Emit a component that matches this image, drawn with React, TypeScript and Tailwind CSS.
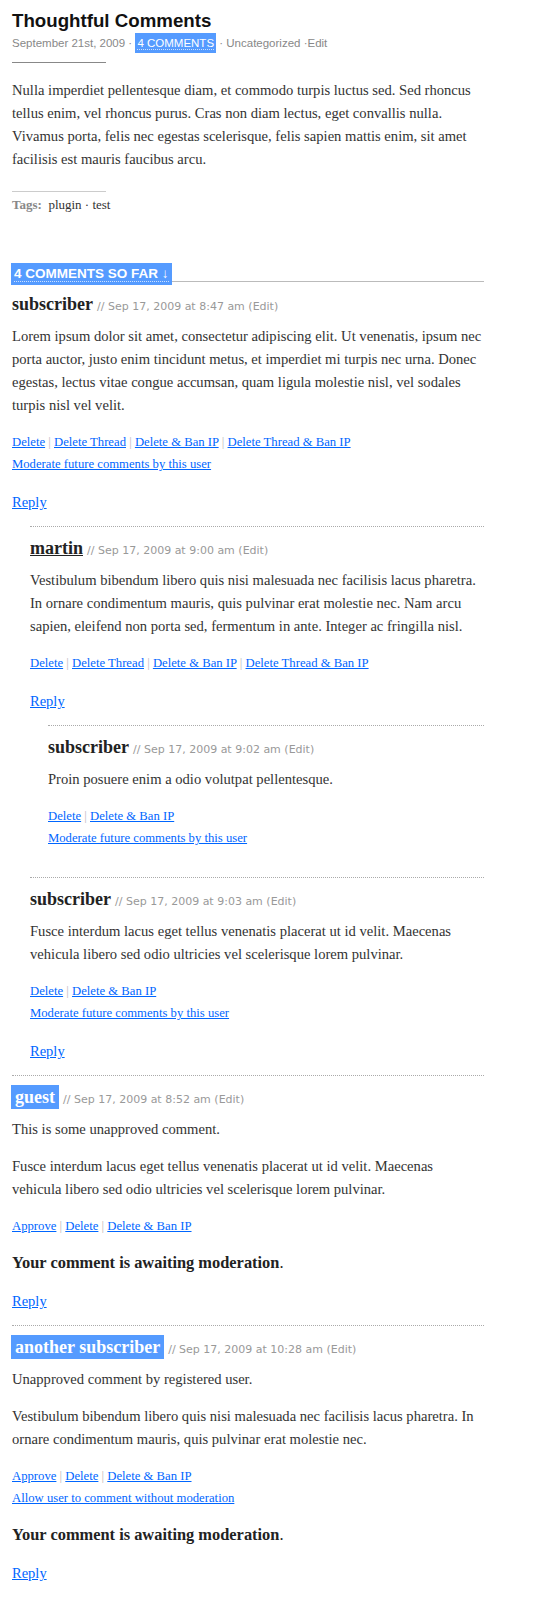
import React from 'react';

type Comment = {
  id: string;
  author: string;
  date: string;
  highlight?: boolean;
  authorLink?: boolean;
  paragraphs: string[];
  actions: string[];
  extra?: string;
  awaiting?: boolean;
  reply?: boolean;
  children?: Comment[];
};

const serif = "[font-family:'Liberation_Serif','Times_New_Roman',serif]";
const sans = "[font-family:'Liberation_Sans',Arial,sans-serif]";
const verdana = "[font-family:'DejaVu_Sans',Verdana,sans-serif]";

const comments: Comment[] = [
  {
    id: 'c1',
    author: 'subscriber',
    date: 'Sep 17, 2009 at 8:47 am',
    paragraphs: [
      'Lorem ipsum dolor sit amet, consectetur adipiscing elit. Ut venenatis, ipsum nec porta auctor, justo enim tincidunt metus, et imperdiet mi turpis nec urna. Donec egestas, lectus vitae congue accumsan, quam ligula molestie nisl, vel sodales turpis nisl vel velit.',
    ],
    actions: ['Delete', 'Delete Thread', 'Delete & Ban IP', 'Delete Thread & Ban IP'],
    extra: 'Moderate future comments by this user',
    reply: true,
    children: [
      {
        id: 'c2',
        author: 'martin',
        authorLink: true,
        date: 'Sep 17, 2009 at 9:00 am',
        paragraphs: [
          'Vestibulum bibendum libero quis nisi malesuada nec facilisis lacus pharetra. In ornare condimentum mauris, quis pulvinar erat molestie nec. Nam arcu sapien, eleifend non porta sed, fermentum in ante. Integer ac fringilla nisl.',
        ],
        actions: ['Delete', 'Delete Thread', 'Delete & Ban IP', 'Delete Thread & Ban IP'],
        reply: true,
        children: [
          {
            id: 'c3',
            author: 'subscriber',
            date: 'Sep 17, 2009 at 9:02 am',
            paragraphs: ['Proin posuere enim a odio volutpat pellentesque.'],
            actions: ['Delete', 'Delete & Ban IP'],
            extra: 'Moderate future comments by this user',
          },
        ],
      },
      {
        id: 'c4',
        author: 'subscriber',
        date: 'Sep 17, 2009 at 9:03 am',
        paragraphs: [
          'Fusce interdum lacus eget tellus venenatis placerat ut id velit. Maecenas vehicula libero sed odio ultricies vel scelerisque lorem pulvinar.',
        ],
        actions: ['Delete', 'Delete & Ban IP'],
        extra: 'Moderate future comments by this user',
        reply: true,
      },
    ],
  },
  {
    id: 'c5',
    author: 'guest',
    highlight: true,
    date: 'Sep 17, 2009 at 8:52 am',
    paragraphs: [
      'This is some unapproved comment.',
      'Fusce interdum lacus eget tellus venenatis placerat ut id velit. Maecenas vehicula libero sed odio ultricies vel scelerisque lorem pulvinar.',
    ],
    actions: ['Approve', 'Delete', 'Delete & Ban IP'],
    awaiting: true,
    reply: true,
  },
  {
    id: 'c6',
    author: 'another subscriber',
    highlight: true,
    date: 'Sep 17, 2009 at 10:28 am',
    paragraphs: [
      'Unapproved comment by registered user.',
      'Vestibulum bibendum libero quis nisi malesuada nec facilisis lacus pharetra. In ornare condimentum mauris, quis pulvinar erat molestie nec.',
    ],
    actions: ['Approve', 'Delete', 'Delete & Ban IP'],
    extra: 'Allow user to comment without moderation',
    awaiting: true,
    reply: true,
  },
];

const CommentItem: React.FC<{ c: Comment; first?: boolean }> = ({ c, first }) => (
  <li className={first ? 'pt-[7px]' : 'border-t border-dotted border-[#aaa] pt-[9px]'}>
    {/* Author line */}
    <div className="h-[24px] whitespace-nowrap leading-[24px]">
      {c.highlight ? (
        <span className={`${serif} -ml-px inline-block bg-[#559bff] px-[4px] text-[18px] font-bold text-white`}>
          {c.author}
        </span>
      ) : (
        <span className={`${serif} text-[18px] font-bold text-[#222] ${c.authorLink ? 'underline' : ''}`}>
          {c.author}
        </span>
      )}
      <span className={`${verdana} ml-[4px] text-[11px] leading-none text-[#999]`}>
        // {c.date} (Edit)
      </span>
    </div>

    {/* Body */}
    <div className={`${serif} mt-[9px] space-y-[14px] text-[14.6px] leading-[23px] text-[#333]`}>
      {c.paragraphs.map((p, i) => (
        <p key={i}>{p}</p>
      ))}
    </div>

    {/* Moderation links */}
    <div className={`${serif} mt-[14px] text-[12.7px] leading-[22px] text-[#0066ff]`}>
      <div>
        {c.actions.map((a, i) => (
          <React.Fragment key={a}>
            {i > 0 && <span className="text-[#bbb]"> | </span>}
            <a href="#" className="underline">
              {a}
            </a>
          </React.Fragment>
        ))}
      </div>
      {c.extra && (
        <div>
          <a href="#" className="underline">
            {c.extra}
          </a>
        </div>
      )}
    </div>

    {c.awaiting && (
      <p className={`${serif} mt-[14px] text-[16.4px] font-bold leading-[23px] text-[#222]`}>
        Your comment is awaiting moderation<span className="font-normal">.</span>
      </p>
    )}

    {c.reply ? (
      <div className={`${serif} mt-[16px] text-[14.5px] leading-[23px]`}>
        <a href="#" className="text-[#0066ff] underline">
          Reply
        </a>
      </div>
    ) : (
      <div className="h-[16px]" />
    )}
    <div className="h-[12px]" />

    {c.children && (
      <ul className="ml-[18px]">
        {c.children.map((ch) => (
          <CommentItem key={ch.id} c={ch} />
        ))}
      </ul>
    )}
  </li>
);

export default function App() {
  return (
    <div className="min-h-screen bg-white">
      <div className="ml-[12px] w-[472px] pt-[10px]">
        {/* Post header */}
        <h1 className={`${sans} text-[18.7px] font-bold leading-[22px] text-[#111]`}>Thoughtful Comments</h1>
        <div className={`${sans} mt-px h-[20px] whitespace-nowrap text-[11.5px] leading-[20px] text-[#888]`}>
          September 21st, 2009 ·{' '}
          <span className="inline-block h-[20px] bg-[#559bff] px-[2px] text-white">
            <span className="border-b border-dotted border-white/70">4 COMMENTS</span>
          </span>{' '}
          · Uncategorized ·Edit
        </div>
        <div className="mt-[9px] h-px w-[94px] bg-[#888]" />

        {/* Post body */}
        <p className={`${serif} mt-[16px] text-[14.6px] leading-[23px] text-[#333]`}>
          Nulla imperdiet pellentesque diam, et commodo turpis luctus sed. Sed rhoncus tellus enim, vel rhoncus
          purus. Cras non diam lectus, eget convallis nulla. Vivamus porta, felis nec egestas scelerisque, felis
          sapien mattis enim, sit amet facilisis est mauris faucibus arcu.
        </p>

        <div className="mt-[20px] h-px w-[94px] bg-[#ccc]" />
        <p className={`${serif} mt-[4px] text-[13px] leading-[18px] text-[#333]`}>
          <span className="font-bold text-[#888]">Tags:</span>&nbsp; plugin · test
        </p>

        {/* Comments heading */}
        <div className="mt-[49px] flex items-end">
          <span className={`${sans} -ml-px flex h-[22px] items-center bg-[#559bff] px-[3px] text-[13.5px] font-bold text-white`}>
            <span className="border-b border-dotted border-white/70 leading-[14px]">4 COMMENTS SO FAR ↓</span>
          </span>
          <div className="mb-[3px] h-px flex-1 bg-[#bbb]" />
        </div>

        {/* Comments */}
        <ol>
          {comments.map((c, i) => (
            <CommentItem key={c.id} c={c} first={i === 0} />
          ))}
        </ol>
      </div>
    </div>
  );
}
